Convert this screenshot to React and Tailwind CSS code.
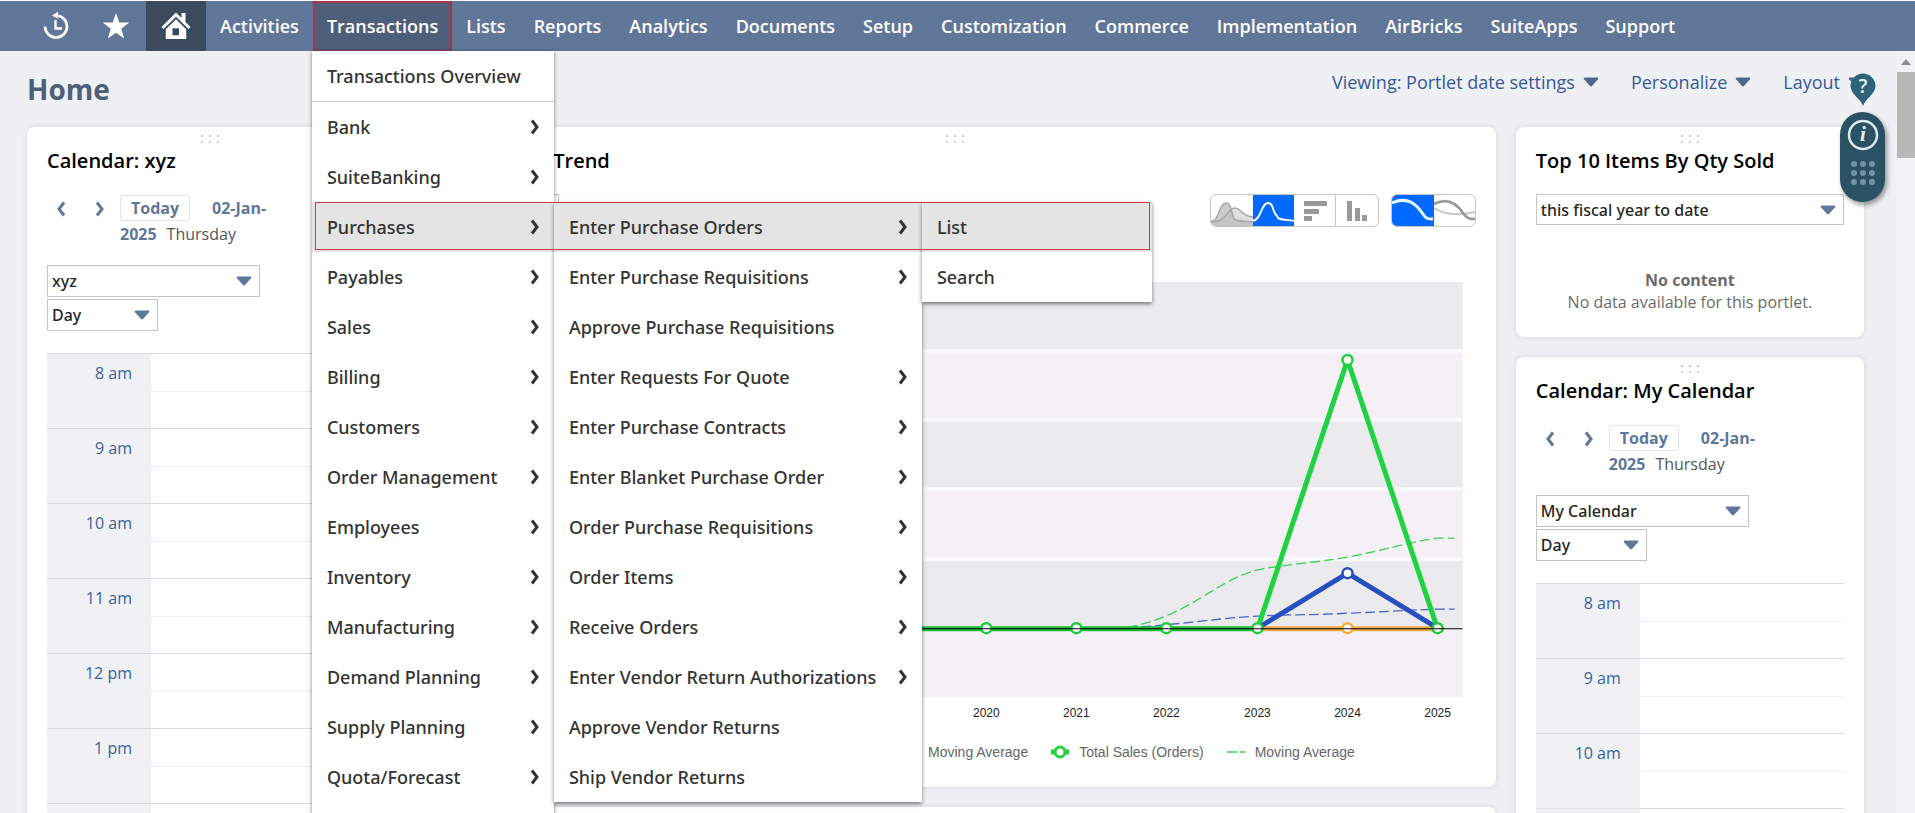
import { Fragment } from 'react'

const NAV_LEFT = ['Activities']
const NAV_RIGHT = [
  'Lists', 'Reports', 'Analytics', 'Documents', 'Setup', 'Customization',
  'Commerce', 'Implementation', 'AirBricks', 'SuiteApps', 'Support',
]

const TRANSACTION_MENU = [
  'Bank', 'SuiteBanking', 'Purchases', 'Payables', 'Sales', 'Billing', 'Customers',
  'Order Management', 'Employees', 'Inventory', 'Manufacturing', 'Demand Planning',
  'Supply Planning', 'Quota/Forecast',
]

const PURCHASES_MENU = [
  { label: 'Enter Purchase Orders', sub: true },
  { label: 'Enter Purchase Requisitions', sub: true },
  { label: 'Approve Purchase Requisitions' },
  { label: 'Enter Requests For Quote', sub: true },
  { label: 'Enter Purchase Contracts', sub: true },
  { label: 'Enter Blanket Purchase Order', sub: true },
  { label: 'Order Purchase Requisitions', sub: true },
  { label: 'Order Items', sub: true },
  { label: 'Receive Orders', sub: true },
  { label: 'Enter Vendor Return Authorizations', sub: true },
  { label: 'Approve Vendor Returns' },
  { label: 'Ship Vendor Returns' },
]

const YEARS = [
  { year: 2020, x: 553 },
  { year: 2021, x: 643 },
  { year: 2022, x: 733 },
  { year: 2023, x: 824 },
  { year: 2024, x: 914 },
  { year: 2025, x: 1004 },
]

const BANDS = [
  { y: 6, fill: '#ebebee' },
  { y: 75, fill: '#f4f0f5' },
  { y: 144, fill: '#ebebee' },
  { y: 213, fill: '#f4f0f5' },
  { y: 283, fill: '#ebebee' },
  { y: 352, fill: '#f4f0f5' },
]

function Chevron({ className, flip }) {
  return (
    <svg viewBox="0 0 10 16" className={className} fill="none" stroke="currentColor" strokeWidth="3">
      <path d={flip ? 'M8 1.5 L3 8 L8 14.5' : 'M2 1.5 L7 8 L2 14.5'} />
    </svg>
  )
}

function Caret({ className }) {
  return (
    <svg viewBox="0 0 16 10" className={className} fill="currentColor">
      <path d="M1.5 0.5h13q1.500 0.500 0.500 1.800L9 9q-1 0.800-2 0L1 2.300q-1-1.300 0.500-1.800z" />
    </svg>
  )
}

function MenuItem({ label, sub, active }) {
  return (
    <li>
      <a
        href="#"
        className={`flex h-[50px] items-center justify-between pl-[15px] pr-3.5 text-[#333] ${active ? 'bg-[#e4e4e4]' : 'bg-white'}`}
      >
        {label}
        {sub && <Chevron className="h-4 w-2.5" />}
      </a>
    </li>
  )
}

function TransactionsDropdown() {
  return (
    <div className="absolute left-[-1px] top-full z-20 font-['Noto_Sans',sans-serif] text-[18px] font-medium">
      <ul className="w-[242px] bg-white pb-4 shadow-[0_1px_4px_rgba(0,0,0,0.5)]">
        <MenuItem label="Transactions Overview" />
        <li className="h-px bg-[#c6c6c6]" />
        {TRANSACTION_MENU.map((label) => (
          <MenuItem key={label} label={label} sub active={label === 'Purchases'} />
        ))}
      </ul>
      <ul className="absolute left-[242px] top-[151px] w-[368px] shadow-[0_2px_4px_rgba(0,0,0,0.5)]">
        {PURCHASES_MENU.map((item, i) => (
          <MenuItem key={item.label} {...item} active={i === 0} />
        ))}
      </ul>
      <ul className="absolute left-[610px] top-[151px] w-[230px] shadow-[0_2px_4px_rgba(0,0,0,0.5)]">
        <MenuItem label="List" active />
        <MenuItem label="Search" />
      </ul>
      <div className="pointer-events-none absolute left-[3px] top-[151px] h-[48px] w-[835px] border border-[#d03a3e]" />
    </div>
  )
}

function NavLink({ children }) {
  return (
    <a href="#" className="flex h-full items-center px-3.5">
      {children}
    </a>
  )
}

function NavBar() {
  return (
    <nav className="relative z-20 mt-px flex h-[50px] items-center bg-[#607799] pl-[26px] text-[18px] font-semibold text-white">
      <button aria-label="Recent records" className="flex h-full w-[60px] items-center justify-center">
        <svg viewBox="0 0 28 28" className="size-7" fill="none" stroke="white" strokeWidth="2.600">
          <path d="M3 14.500a11 11 0 1 0 11-11" />
          <path d="M13.500 8v8.500h6.500" strokeWidth="2.400" />
          <path d="M10 3.500l6-3.800v7z" fill="white" stroke="none" />
        </svg>
      </button>
      <button aria-label="Shortcuts" className="flex h-full w-[60px] items-center justify-center">
        <svg viewBox="0 0 28 28" className="size-7" fill="white">
          <path d="M14 1l3.200 9.400 10 0.200-8 6.100 2.900 9.900L14 20.800l-8.100 5.800 2.900-9.900-8-6.100 10-0.200z" />
        </svg>
      </button>
      <a href="#" aria-label="Home" className="flex h-full w-[60px] items-center justify-center bg-[#3b4a5d]">
        <svg viewBox="0 0 30 28" className="h-7 w-[30px]" fill="white">
          <path d="M15 0.500L0.500 15l2 2L15 4.700 27.500 17l2-2L24.500 10V1h-4v5z" />
          <path d="M15 7.200L4.800 17.300V27h20.400v-9.700zM11.500 16.300h6.500v7h-6.500z" fillRule="evenodd" />
        </svg>
      </a>
      {NAV_LEFT.map((label) => (
        <NavLink key={label}>{label}</NavLink>
      ))}
      <div className="relative h-full">
        <button className="flex h-[51px] items-center border-2 border-[#a8364a] bg-[#4d5f79] px-3">Transactions</button>
        <TransactionsDropdown />
      </div>
      {NAV_RIGHT.map((label) => (
        <NavLink key={label}>{label}</NavLink>
      ))}
    </nav>
  )
}

function Portlet({ children, className = '' }) {
  return (
    <section className={`relative rounded-lg bg-white px-5 shadow-[0_0_6px_rgba(0,0,0,0.1)] ${className}`}>
      <div className="grid h-4 grid-cols-[2px_2px_2px] content-end justify-center gap-x-1.5 gap-y-1">
        {[0, 1, 2, 3, 4, 5].map((dot) => (
          <i key={dot} className="size-0.5 bg-[#cfcfcf]" />
        ))}
      </div>
      {children}
    </section>
  )
}

function PortletTitle({ children }) {
  return <h2 className="pt-1 text-[20px] leading-7 font-semibold text-black">{children}</h2>
}

function SelectBox({ label, value, className }) {
  return (
    <div className={`relative ${className}`}>
      <select
        aria-label={label}
        defaultValue={value}
        className="size-full appearance-none border border-[#c4c4c4] bg-white pl-1 font-['Noto_Sans',sans-serif] text-[16px] font-medium text-[#262626]"
      >
        <option>{value}</option>
      </select>
      <Caret className="pointer-events-none absolute right-2 top-[11px] h-2.5 w-4 text-[#607799]" />
    </div>
  )
}

function CalendarPortlet({ title, owner, hours }) {
  return (
    <Portlet>
      <PortletTitle>{title}</PortletTitle>
      <div className="mt-5 flex h-14 text-[16px] text-[#607799]">
        <button aria-label="Previous day" className="mt-1.5 ml-[9px] h-4"><Chevron flip className="h-4 w-2.5" /></button>
        <button aria-label="Next day" className="mt-1.5 ml-[29px] h-4"><Chevron className="h-4 w-2.5" /></button>
        <p className="ml-[15px] w-[170px] leading-[26px] font-bold">
          <button className="mr-[22px] h-[26px] rounded-[3px] border border-[#e0e3ea] px-[10px] leading-6">Today</button>
          <span>02-Jan-</span>
          <span className="block h-[26px]">
            2025<span className="ml-2.5 font-normal text-[#555]">Thursday</span>
          </span>
        </p>
      </div>
      <div className="mt-[14px] flex flex-col gap-0.5">
        <SelectBox label="Calendar" value={owner} className="h-8 w-[213px]" />
        <SelectBox label="Range" value="Day" className="h-8 w-[111px]" />
      </div>
      <table className="mt-[22px] w-full table-fixed border-collapse">
        <tbody>
          {hours.map((hour) => (
            <Fragment key={hour}>
              <tr className="h-[38px] border-t border-[#d9dce0]">
                <th rowSpan={2} scope="row" className="w-[104px] bg-[#eff1f5] pt-[7px] pr-[19px] text-right align-top text-[16px] font-normal text-[#3b619c]">
                  {hour}
                </th>
                <td className="border-b border-b-[#edf0f4]" />
              </tr>
              <tr className="h-[37px]">
                <td />
              </tr>
            </Fragment>
          ))}
          <tr className="h-[38px] border-t border-[#d9dce0]">
            <td className="w-[104px] bg-[#eff1f5]" />
            <td />
          </tr>
        </tbody>
      </table>
    </Portlet>
  )
}

function ChartToggles() {
  return (
    <div className="flex gap-3">
      <div className="flex h-[33px] overflow-hidden rounded-md border border-[#c6c6c6]">
        <button aria-label="Area chart" className="w-[42px]">
          <svg viewBox="0 0 42 31" className="h-[31px] w-[42px]">
            <path d="M0 26C8 27 8 8 15 8C20 8 20 16 23 24C28 27 36 26 42 27V31H0z" fill="#cbcbcb" />
            <path d="M0 27C16 28 16 13 24 13C31 13 30 21 42 22V31H0z" fill="#bdbdbd" fillOpacity="0.500" />
            <path d="M0 26C8 27 8 8 15 8C20 8 20 16 23 24C28 27 36 26 42 27" fill="none" stroke="#a8a8a8" strokeWidth="1.500" />
            <path d="M0 27C16 28 16 13 24 13C31 13 30 21 42 22" fill="none" stroke="#a8a8a8" strokeWidth="1.500" />
          </svg>
        </button>
        <button aria-label="Line chart" className="w-[41px] bg-[#0069ff]">
          <svg viewBox="0 0 41 31" className="h-[31px] w-[41px]" fill="none" stroke="#fff" strokeWidth="1.800">
            <path d="M0 25.500C8 26 8 8 15 8C21 8 19 17 24 21C25 26 33 24 41 26" />
          </svg>
        </button>
        <button aria-label="Bar chart" className="w-[42px] border-r border-[#c6c6c6]">
          <svg viewBox="0 0 41 31" className="h-[31px] w-[41px]" fill="#999">
            <path d="M10 6h23v5H10zM10 14h15v5H10zM10 21h8v5h-8z" />
          </svg>
        </button>
        <button aria-label="Column chart" className="w-[42px]">
          <svg viewBox="0 0 42 31" className="h-[31px] w-[42px]" fill="#999">
            <path d="M11 6h5v20h-5zM19 13h5v13h-5zM26 20h5v6h-5z" />
          </svg>
        </button>
      </div>
      <div className="flex h-[33px] overflow-hidden rounded-md border border-[#c6c6c6]">
        <button aria-label="Moving average on" className="w-[42px] bg-[#0069ff]">
          <svg viewBox="0 0 42 31" className="h-[31px] w-[42px]" fill="none" stroke="#e4f6ff" strokeWidth="3">
            <path d="M0 8C16 1 24 9 31 19C34 24 36 24 41 24" />
          </svg>
        </button>
        <button aria-label="Moving average off" className="w-[41px]">
          <svg viewBox="0 0 41 31" className="h-[31px] w-[41px]" fill="none">
            <path d="M0 13C12 20 26 21 41 17" stroke="#c8c8c8" strokeWidth="2" />
            <path d="M0 9C14 2 23 9 29 18C33 24 36 24 41 24" stroke="#999" strokeWidth="2.600" />
          </svg>
        </button>
      </div>
    </div>
  )
}

function TrendChart() {
  return (
    <svg viewBox="0 0 1042 448" className="w-full" role="img" aria-label="Sales by year">
      {BANDS.map((band) => (
        <rect key={band.y} x="40" y={band.y} width="989" height="69" fill={band.fill} />
      ))}
      {BANDS.slice(1, 5).map((band) => (
        <path key={band.y} d={`M40 ${band.y}H1029`} stroke="#fafafc" strokeWidth="3.500" />
      ))}
      <path d="M680 352C700 351 712 348 732 340C770 324 790 303 823 294C850 288 880 287 914 281C946 275 971 267 1004 262H1021" fill="none" stroke="#39cf58" strokeWidth="1.300" strokeDasharray="10 4" />
      <path d="M680 352C740 350 780 342 824 340C861 338 881 339 914 337C946 336 971 334 1004 333H1021" fill="none" stroke="#4464cc" strokeWidth="1.300" strokeDasharray="10 4" />
      <path d="M824 352.5H1004" stroke="#f0ab4a" strokeWidth="5" />
      <path d="M824 352L914 297L1004 352" fill="none" stroke="#284fc0" strokeWidth="5" />
      <path d="M824 352.5L914 84L1004 352.5" fill="none" stroke="#1fd23f" strokeWidth="5" strokeLinejoin="round" />
      <path d="M40 352.5H824" stroke="#1dbb38" strokeWidth="5" />
      <g fill="#fff" strokeWidth="2.500">
        <circle cx="914" cy="352" r="5" stroke="#f5b032" />
        <circle cx="914" cy="297" r="5" stroke="#284fc0" />
        <circle cx="914" cy="84" r="5" stroke="#1fd23f" />
        {YEARS.filter((tick) => tick.year !== 2024).map((tick) => (
          <circle key={tick.year} cx={tick.x} cy="352" r="5" stroke="#1fc83c" />
        ))}
      </g>
      <path d="M40 352.5H1029" stroke="#000" />
      {YEARS.map((tick) => (
        <text key={tick.year} x={tick.x} y="441" textAnchor="middle" fontSize="12" fill="#222" fontFamily="Liberation Sans, Arial, sans-serif">
          {tick.year}
        </text>
      ))}
    </svg>
  )
}

function TrendPortlet() {
  return (
    <Portlet className="h-[660px]">
      <div className="pl-[120px]">
        <PortletTitle>Trend</PortletTitle>
      </div>
      <div className="mt-[19px] flex h-8 items-start justify-between">
        <SelectBox label="Period" value="" className="h-8 w-[126px]" />
        <ChartToggles />
      </div>
      <div className="mt-[50px]">
        <TrendChart />
      </div>
      <div className="mt-5 flex items-center justify-end pr-[121px] font-['Liberation_Sans',Arial,sans-serif] text-[14px] leading-4 text-[#666]">
        <span>Moving Average</span>
        <svg viewBox="0 0 18 14" className="mr-2.5 ml-[23px] h-3.5 w-[18px]">
          <path d="M0 7h18" stroke="#1fd23f" strokeWidth="5" />
          <circle cx="9" cy="7" r="5" fill="#fff" stroke="#1fd23f" strokeWidth="3" />
        </svg>
        <span>Total Sales (Orders)</span>
        <svg viewBox="0 0 18 14" className="mr-2.5 ml-[23px] h-3.5 w-[18px]">
          <path d="M0 7h18" stroke="#39cf58" strokeWidth="1.500" strokeDasharray="10 3" />
        </svg>
        <span>Moving Average</span>
      </div>
    </Portlet>
  )
}

function TopItemsPortlet() {
  return (
    <Portlet className="h-[210px]">
      <PortletTitle>Top 10 Items By Qty Sold</PortletTitle>
      <SelectBox label="Period" value="this fiscal year to date" className="mt-[19px] h-[31px] w-full" />
      <div className="mt-11 text-center text-[16px] leading-[22px] text-[#6b6b6b]">
        <p className="font-bold">No content</p>
        <p>No data available for this portlet.</p>
      </div>
    </Portlet>
  )
}

function HeaderLink({ children }) {
  return (
    <button className="flex items-center gap-2">
      {children}
      <Caret className="h-2.5 w-4 text-[#51678b]" />
    </button>
  )
}

// Floating help pin and quick-info handle that sit over the right column
function HelpWidget() {
  return (
    <div className="absolute top-[73px] right-[30px] z-10 flex flex-col items-center">
      <button aria-label="Help">
        <svg viewBox="0 0 26 34" className="h-[34px] w-[26px]">
          <path d="M13 33C11 26 0.500 21 0.500 13a12.500 12.500 0 0 1 25 0C25.500 21 15 26 13 33z" fill="#2e6479" />
          <text x="13" y="20" textAnchor="middle" fontSize="19" fontWeight="600" fill="#e6f2f6" fontFamily="Open Sans, sans-serif">?</text>
        </svg>
      </button>
      <div className="mt-[5px] flex h-[90px] w-[45px] flex-col items-center rounded-full bg-[#2b5164] pt-[7px] shadow-[2px_3px_5px_rgba(0,0,0,0.4)]">
        <button aria-label="Info">
          <svg viewBox="0 0 32 32" className="size-8">
            <circle cx="16" cy="16" r="14" fill="none" stroke="#dcebf2" strokeWidth="2.500" />
            <text x="16" y="22" textAnchor="middle" fontSize="21" fontWeight="bold" fontStyle="italic" fill="#e8f1f5" fontFamily="Liberation Serif, serif">i</text>
          </svg>
        </button>
        <div className="mt-2.5 grid grid-cols-3 gap-[3px]">
          {[0, 1, 2, 3, 4, 5, 6, 7, 8].map((dot) => (
            <i key={dot} className="size-1.5 rounded-full bg-[#7393a6]" />
          ))}
        </div>
      </div>
    </div>
  )
}

function Scrollbar() {
  return (
    <div className="flex w-[18px] shrink-0 flex-col items-center bg-[#f1f2f3] pt-2">
      <svg viewBox="0 0 10 6" className="h-1.5 w-2.5" fill="#8c8c8c"><path d="M5 0l5 6H0z" /></svg>
      <div className="mt-[7px] h-[86px] w-full bg-[#b9b9b9]" />
    </div>
  )
}

export default function App() {
  return (
    <div className="relative flex h-screen flex-col overflow-hidden bg-white font-['Open_Sans',sans-serif]">
      <NavBar />
      <div className="flex min-h-0 flex-1 bg-[#eef0f4]">
        <main className="min-w-0 flex-1 pr-[33px] pl-[27px]">
          <header className="flex h-[76px] items-start justify-between">
            <h1 className="pt-[18px] text-[28px] leading-10 font-bold text-[#4d5f79]">Home</h1>
            <div className="flex gap-8 pt-[18px] text-[18px] leading-[26px] text-[#36589a]">
              <HeaderLink>Viewing: Portlet date settings</HeaderLink>
              <HeaderLink>Personalize</HeaderLink>
              <HeaderLink>Layout</HeaderLink>
            </div>
          </header>
          <div className="grid grid-cols-[366fr_1082fr_348fr] items-start gap-5">
            <CalendarPortlet title="Calendar: xyz" owner="xyz" hours={['8 am', '9 am', '10 am', '11 am', '12 pm', '1 pm']} />
            <div className="flex flex-col gap-5">
              <TrendPortlet />
              <Portlet className="h-[300px]" />
            </div>
            <div className="flex flex-col gap-5">
              <TopItemsPortlet />
              <CalendarPortlet title="Calendar: My Calendar" owner="My Calendar" hours={['8 am', '9 am', '10 am']} />
            </div>
          </div>
        </main>
        <Scrollbar />
      </div>
      <HelpWidget />
    </div>
  )
}
